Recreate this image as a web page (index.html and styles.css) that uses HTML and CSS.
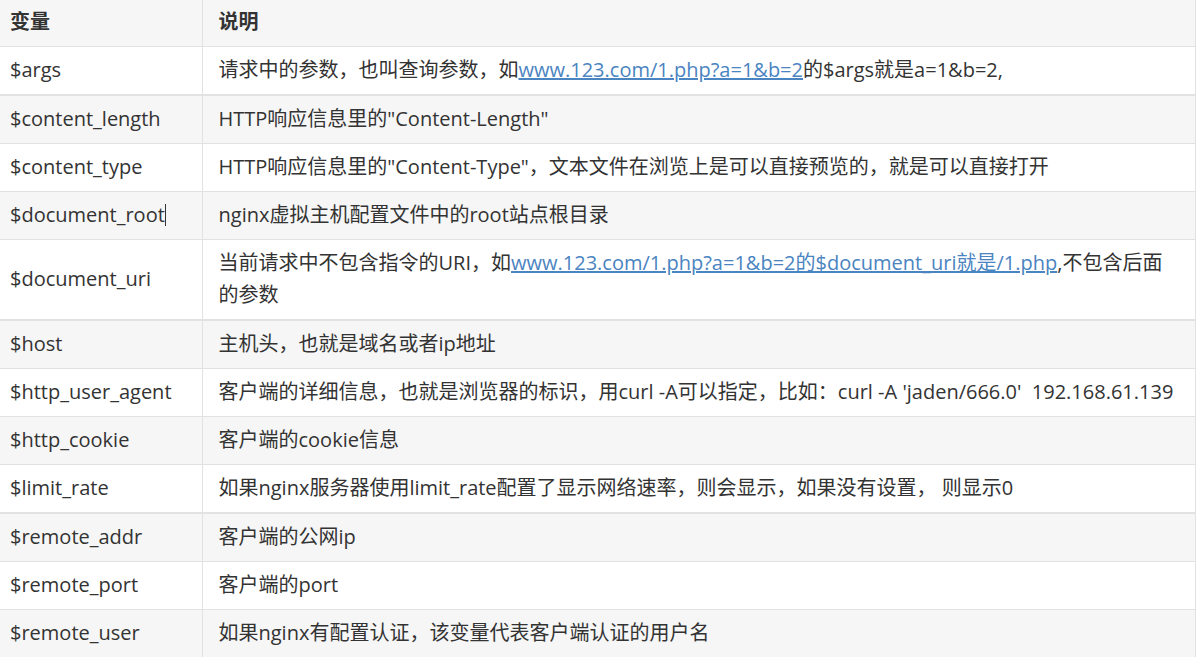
FILE: index.html
```
<!DOCTYPE html>
<html lang="zh-CN">

<head>
    <meta charset="UTF-8">
    <meta name="viewport" content="width=device-width, initial-scale=1.0">
    <title>nginx 变量</title>
    <link rel="stylesheet" href="styles.css">
</head>

<body>
    <table class="vars">
        <thead>
            <tr>
                <th class="name">变量</th>
                <th class="desc">说明</th>
            </tr>
        </thead>
        <tbody>
            <tr class="break">
                <td>$args</td>
                <td class="desc">请求中的参数，也叫查询参数，如<a href="#">www.123.com/1.php?a=1&amp;b=2</a>的$args就是a=1&amp;b=2,</td>
            </tr>
            <tr>
                <td>$content_length</td>
                <td class="desc">HTTP响应信息里的"Content-Length"</td>
            </tr>
            <tr>
                <td>$content_type</td>
                <td class="desc">HTTP响应信息里的"Content-Type"，文本文件在浏览上是可以直接预览的，就是可以直接打开</td>
            </tr>
            <tr>
                <td>$document_root<span class="caret"></span></td>
                <td class="desc">nginx虚拟主机配置文件中的root站点根目录</td>
            </tr>
            <tr class="break">
                <td>$document_uri</td>
                <td class="desc">当前请求中不包含指令的URI，如<a href="#">www.123.com/1.php?a=1&amp;b=2的$document_uri就是/1.php</a>,不包含后面的参数</td>
            </tr>
            <tr>
                <td>$host</td>
                <td class="desc">主机头，也就是域名或者ip地址</td>
            </tr>
            <tr>
                <td>$http_user_agent</td>
                <td class="desc">客户端的详细信息，也就是浏览器的标识，用curl -A可以指定，比如：curl -A 'jaden/666.0'&nbsp; 192.168.61.139</td>
            </tr>
            <tr>
                <td>$http_cookie</td>
                <td class="desc">客户端的cookie信息</td>
            </tr>
            <tr class="break">
                <td>$limit_rate</td>
                <td class="desc">如果nginx服务器使用limit_rate配置了显示网络速率，则会显示，如果没有设置， 则显示0</td>
            </tr>
            <tr>
                <td>$remote_addr</td>
                <td class="desc">客户端的公网ip</td>
            </tr>
            <tr>
                <td>$remote_port</td>
                <td class="desc">客户端的port</td>
            </tr>
            <tr>
                <td>$remote_user</td>
                <td class="desc">如果nginx有配置认证，该变量代表客户端认证的用户名</td>
            </tr>
        </tbody>
    </table>
</body>

</html>
```

FILE: styles.css
```
* {
    padding: 0;
    margin: 0;
    box-sizing: border-box;
}

body {
    background-color: #ffffff;
    font-family: "Open Sans", "Noto Sans CJK SC", sans-serif;
    font-size: 20px;
    color: #333333;
    overflow: hidden;
}

.vars {
    width: 1204px;
    margin-left: -8px;
    border-collapse: collapse;
    border-right: 1px solid #e2e2e2;
    font-size: 20px;
}

.vars th,
.vars td {
    text-align: left;
    vertical-align: middle;
    padding: 7px 18px 8px;
    line-height: 32px;
    border-bottom: 1px solid #e2e2e2;
    border-right: 1px solid #e2e2e2;
}

.vars th {
    font-weight: 700;
    padding-top: 6px;
}

.vars .name {
    width: 210px;
}

.vars .desc {
    padding-left: 16px;
}

.vars thead tr,
.vars tbody tr:nth-child(even) {
    background-color: #f6f6f6;
}

.vars tr.break td {
    border-bottom: 2px solid #e2e2e2;
}

.vars a {
    color: #4a84c1;
    text-decoration: underline;
}

.caret {
    display: inline-block;
    width: 1px;
    height: 22px;
    background-color: #333333;
    vertical-align: -4px;
}
```
